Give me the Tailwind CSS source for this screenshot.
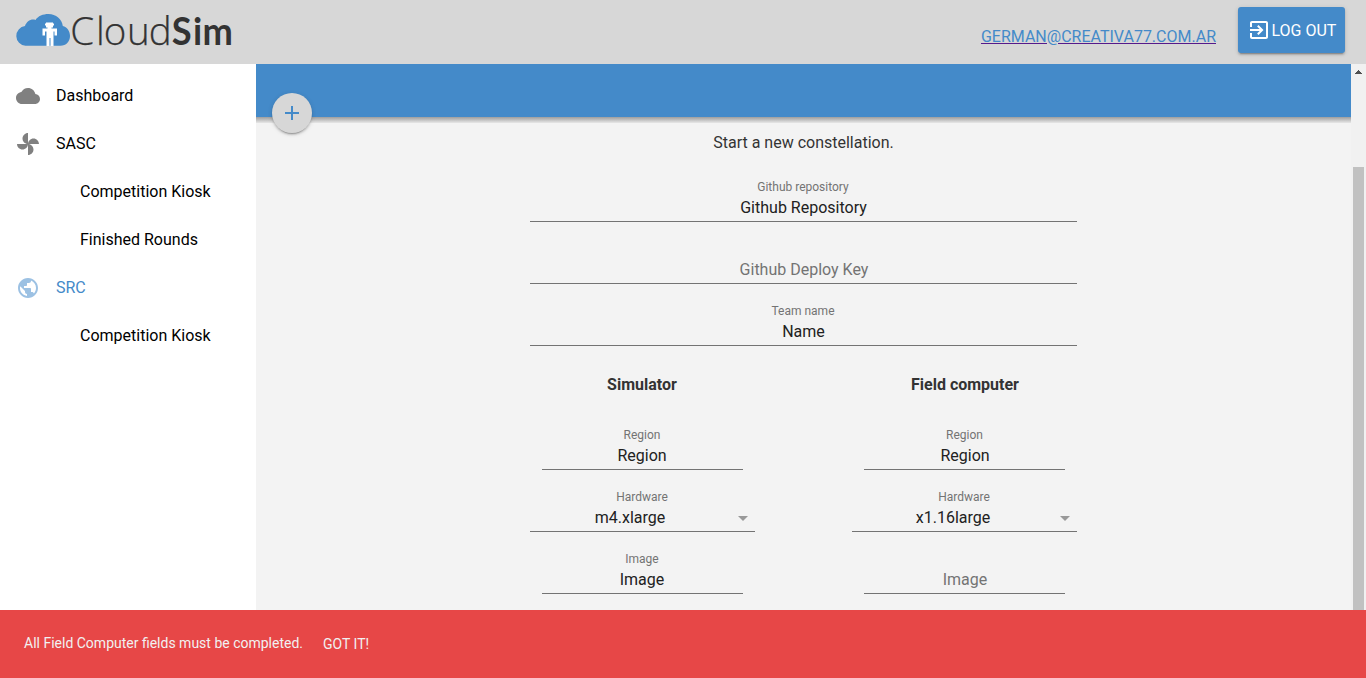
<!DOCTYPE html>
<html lang="en">
<head>
<meta charset="utf-8">
<title>CloudSim</title>
<script src="https://cdn.jsdelivr.net/npm/@tailwindcss/browser@4"></script>
</head>
<body class="h-[678px] w-[1366px] overflow-hidden bg-white font-[Roboto,sans-serif] text-base leading-6 text-[#212121] relative flex flex-col">
<header class="flex h-16 shrink-0 items-start bg-[#d7d7d7] pl-4 pr-[21px]">
  <svg class="h-16 w-[220px] shrink-0" viewBox="16 0 220 64" aria-label="CloudSim">
    <path fill="#448ac9" d="M25.500 45.800a9.900 9.900 0 0 1-.5-19.700C26.500 21.500 31 18.500 35.500 20C38 16 43 14 48.500 14C56 14 62 19 62.800 26C67 27 70 31 70 36C70 41.500 66 45.800 60.500 45.800Z"/>
    <path fill="#fff" d="M46 22.500h7v1h1v2h-1v2h-1.500v1H57v7h-2.500v-4H53.500V46h-3v-8h-1v8h-3V31.500H45v4h-2.500v-7H47.500v-1H46v-2h-1v-2h1z"/>
    <text x="70.300 96 103.800 127 148.700" y="45" font-family="Open Sans" font-weight="300" font-size="38.500" fill="#333" stroke="#333" stroke-width="0.250">Cloud</text>
    <text transform="translate(171.800 45) scale(0.930 1)" x="0 22.900 32.900" y="0" font-family="Lato" font-weight="700" font-size="39" fill="#333">Sim</text>
  </svg>
  <a class="ml-auto mt-[25px] mr-[22px] text-[#448ac9] underline decoration-[#551a8b]">GERMAN@CREATIVA77.COM.AR</a>
  <button class="mt-[7px] flex h-[46px] w-[107px] items-center rounded-[3px] bg-[#448ac9] pl-[9px] text-white shadow-[0_2px_2px_0_rgba(0,0,0,0.14),0_1px_5px_0_rgba(0,0,0,0.12),0_3px_1px_-2px_rgba(0,0,0,0.2)]">
    <svg class="size-6 shrink-0" viewBox="0 0 24 24" fill="currentColor"><path d="M10.090 15.590L11.500 17l5-5-5-5-1.410 1.410L12.670 11H3v2h9.670l-2.580 2.590zM19 3H5c-1.110 0-2 .9-2 2v4h2V5h14v14H5v-4H3v4c0 1.100.89 2 2 2h14c1.100 0 2-.9 2-2V5c0-1.100-.9-2-2-2z"/></svg>
    <span class="ml-[0.5px] whitespace-nowrap pt-[2px]">LOG OUT</span>
  </button>
</header>
<div class="flex min-h-0 flex-1">
  <nav class="flex w-64 shrink-0 flex-col pt-2 text-black">
    <a class="flex h-12 items-center gap-4 pl-4"><svg class="size-6 text-[#808080]" viewBox="0 0 24 24" fill="currentColor"><path d="M19.350 10.040C18.670 6.590 15.640 4 12 4 9.110 4 6.600 5.640 5.350 8.040 2.340 8.360 0 10.910 0 14c0 3.310 2.690 6 6 6h13c2.760 0 5-2.240 5-5 0-2.640-2.050-4.780-4.650-4.960z"/></svg><span>Dashboard</span></a>
    <a class="flex h-12 items-center gap-4 pl-4"><svg class="size-6 text-[#808080]" viewBox="0 0 24 24" fill="currentColor"><path d="M12 12c0-3 2.500-5.500 5.500-5.500S23 9 23 12H12zm0 0c0 3-2.500 5.500-5.500 5.500S1 15 1 12h11zm0 0c-3 0-5.500-2.500-5.500-5.500S9 1 12 1v11zm0 0c3 0 5.500 2.500 5.500 5.500S15 23 12 23V12z"/></svg><span>SASC</span></a>
    <a class="flex h-12 items-center pl-20">Competition Kiosk</a>
    <a class="flex h-12 items-center pl-20">Finished Rounds</a>
    <a class="flex h-12 items-center gap-4 pl-4 text-[#448ac9]"><svg class="size-6 text-[#9cc1e3]" viewBox="0 0 24 24" fill="currentColor"><path d="M12 2C6.480 2 2 6.480 2 12s4.480 10 10 10 10-4.480 10-10S17.520 2 12 2zm-1 17.930c-3.950-.49-7-3.850-7-7.930 0-.62.080-1.210.21-1.790L9 15v1c0 1.100.9 2 2 2v1.930zm6.900-2.540c-.26-.81-1-1.390-1.900-1.390h-1v-3c0-.55-.45-1-1-1H8v-2h2c.55 0 1-.45 1-1V7h2c1.100 0 2-.9 2-2v-.41c2.930 1.190 5 4.060 5 7.410 0 2.080-.8 3.970-2.100 5.390z"/></svg><span>SRC</span></a>
    <a class="flex h-12 items-center pl-20">Competition Kiosk</a>
  </nav>
  <main class="relative flex w-[1095px] flex-col items-center overflow-hidden bg-[#f3f3f3]">
    <div class="h-[53px] w-full shrink-0 bg-[#448ac9]"></div>
    <div class="h-[6px] w-full shrink-0 bg-linear-to-b from-black/35 to-black/5"></div>
    <button class="absolute left-4 top-[29px] flex size-10 items-center justify-center rounded-full bg-[#d7d7d7] text-[#448ac9] shadow-[0_2px_2px_0_rgba(0,0,0,0.14),0_1px_5px_0_rgba(0,0,0,0.12),0_3px_1px_-2px_rgba(0,0,0,0.2)]"><svg class="size-6" viewBox="0 0 24 24" fill="currentColor"><path d="M19 13h-6v6h-2v-6H5v-2h6V5h2v6h6v2z"/></svg></button>
    <form class="flex w-[547px] shrink-0 flex-col pt-2 text-center">
      <p class="h-[38px] text-[#333]">Start a new constellation.</p>
      <div class="h-[62px] pt-2"><div class="h-5 pr-px text-xs leading-5 text-[#737373]">Github repository</div><div class="h-[25px] border-b border-[#737373] leading-[22px]">Github Repository</div></div>
      <div class="h-[62px] pt-7"><div class="h-[25px] border-b border-[#737373] pl-px leading-[22px] text-[#737373]">Github Deploy Key</div></div>
      <div class="h-[62px] pt-2"><div class="h-5 pr-px text-xs leading-5 text-[#737373]">Team name</div><div class="h-[25px] border-b border-[#737373] leading-[22px]">Name</div></div>
      <div class="flex justify-between">
        <section class="w-[225px] pt-[18px]">
          <h2 class="h-11 pr-px font-bold text-[#333]">Simulator</h2>
          <div class="mx-3 h-[62px] pt-2"><div class="h-5 pr-px text-xs leading-5 text-[#737373]">Region</div><div class="h-[25px] border-b border-[#737373] pr-px leading-[22px]">Region</div></div>
          <div class="h-[62px] pt-2"><div class="h-5 pr-px text-xs leading-5 text-[#737373]">Hardware</div><div class="flex h-[25px] border-b border-[#737373] leading-[22px]"><span class="flex-1 pr-px">m4.xlarge</span><svg class="-mt-px size-6 text-[#999]" viewBox="0 0 24 24" fill="currentColor"><path d="M7 10l5 5 5-5z"/></svg></div></div>
          <div class="mx-3 h-[62px] pt-2"><div class="h-5 pr-px text-xs leading-5 text-[#737373]">Image</div><div class="h-[25px] border-b border-[#737373] pr-px leading-[22px]">Image</div></div>
        </section>
        <section class="w-[225px] pt-[18px]">
          <h2 class="h-11 pl-px font-bold text-[#333]">Field computer</h2>
          <div class="mx-3 h-[62px] pt-2"><div class="h-5 text-xs leading-5 text-[#737373]">Region</div><div class="h-[25px] border-b border-[#737373] pl-px leading-[22px]">Region</div></div>
          <div class="h-[62px] pt-2"><div class="h-5 pr-px text-xs leading-5 text-[#737373]">Hardware</div><div class="flex h-[25px] border-b border-[#737373] leading-[22px]"><span class="flex-1 pl-px">x1.16large</span><svg class="-mt-px size-6 text-[#999]" viewBox="0 0 24 24" fill="currentColor"><path d="M7 10l5 5 5-5z"/></svg></div></div>
          <div class="mx-3 h-[62px] pt-7"><div class="h-[25px] border-b border-[#737373] pl-px leading-[22px] text-[#737373]">Image</div></div>
        </section>
      </div>
    </form>
  </main>
  <div class="flex w-[15px] flex-col items-center bg-[#f1f1f1] pt-[6px]">
    <svg class="h-1 w-[7px] shrink-0" viewBox="0 0 7 4" shape-rendering="crispEdges" fill="#505050"><path d="M3 0h1v1h1v1h1v1h1v1H0V3h1V2h1V1h1z"/></svg>
    <div class="mt-[93px] w-[11px] flex-1 bg-[#c1c1c1]"></div>
  </div>
</div>
<div class="absolute inset-x-0 bottom-0 flex h-[68px] items-center bg-[#e74747] pl-6 text-sm leading-5 text-[#f1f1f1]">
  <span class="mb-[2px]">All Field Computer fields must be completed.</span>
  <button class="ml-5">GOT IT!</button>
</div>
</body>
</html>
